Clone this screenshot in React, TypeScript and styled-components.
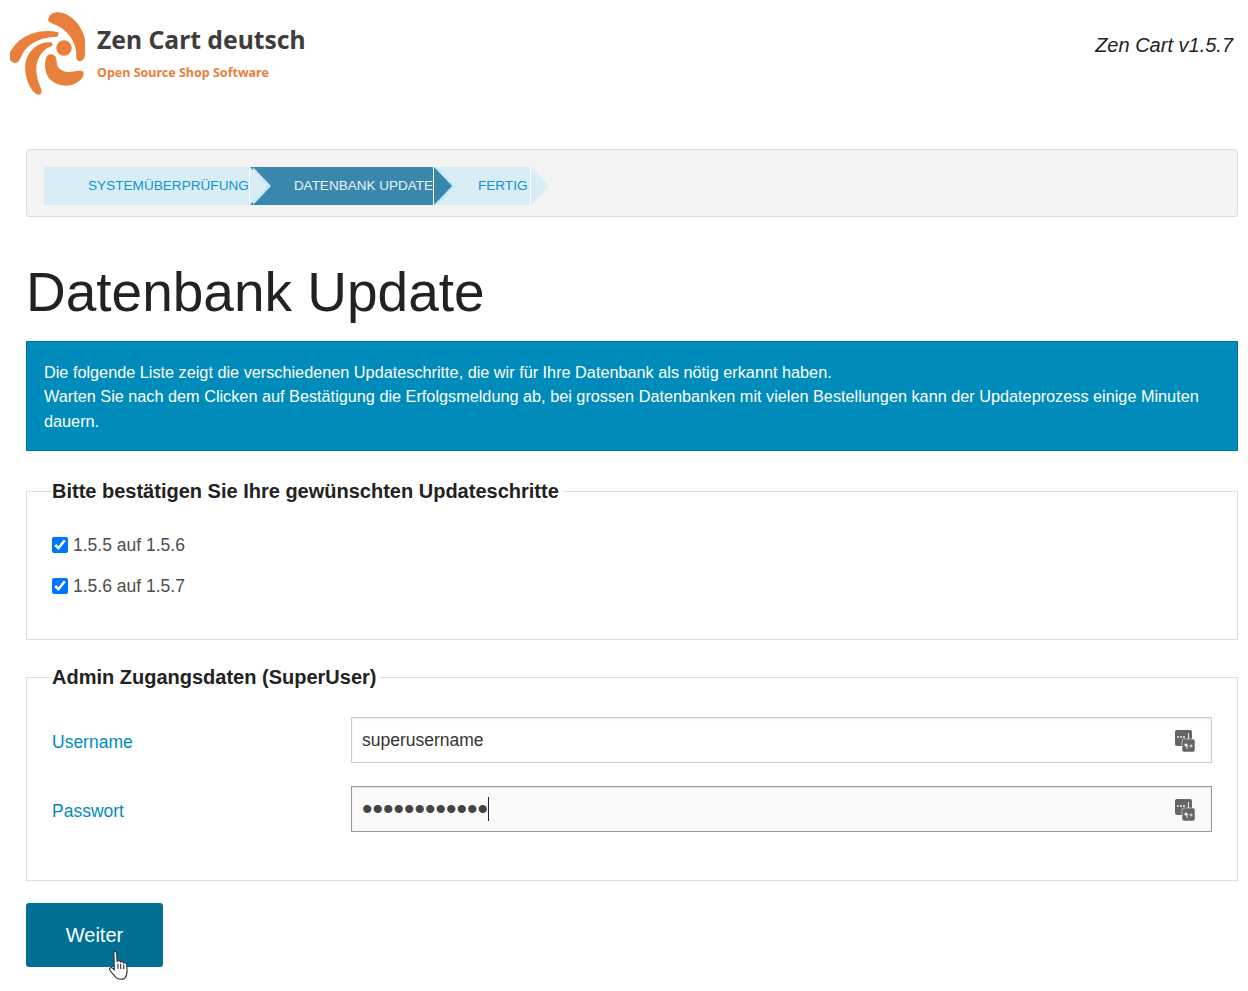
import React from 'react';
import styled, { createGlobalStyle } from 'styled-components';

const GlobalStyle = createGlobalStyle`
  html, body {
    margin: 0;
    padding: 0;
    background: #fff;
    font-family: "Liberation Sans", Arial, sans-serif;
    color: #222;
  }
  * {
    box-sizing: border-box;
  }
`;

const Page = styled.div`
  position: relative;
  width: 1248px;
  min-height: 991px;
  padding: 0 10px 24px 26px;
`;

const Header = styled.header`
  display: flex;
  justify-content: space-between;
  height: 149px;
  margin-left: -16px;
  padding-top: 12px;
`;

const Brand = styled.div`
  display: flex;
  align-items: flex-start;
  gap: 12px;
`;

const BrandText = styled.div`
  display: flex;
  flex-direction: column;
  padding-top: 10px;
  font-family: "Noto Sans", sans-serif;
  font-weight: 700;
`;

const BrandName = styled.span`
  font-size: 24.7px;
  line-height: 36px;
  color: #3f3d3c;
`;

const BrandSlogan = styled.span`
  margin-top: 6px;
  font-size: 12.5px;
  line-height: 18px;
  color: #e8803c;
`;

const Version = styled.div`
  margin: 20px 5px 0 0;
  font-size: 20px;
  line-height: 26px;
  font-style: italic;
  color: #222;
`;

const Crumbs = styled.nav`
  display: flex;
  height: 68px;
  padding: 17px;
  background: #f3f3f3;
  border: 1px solid #ddd;
  border-radius: 3px;
`;

const Step = styled.div<{ $active?: boolean }>`
  position: relative;
  display: flex;
  align-items: center;
  height: 38px;
  padding: 0 0 2px 44px;
  font-size: ${(p) => (p.$active ? '13.5px' : '13.6px')};
  color: ${(p) => (p.$active ? '#e8f3f8' : '#1295cf')};
  background: ${(p) => (p.$active ? '#3a87ad' : '#d9edf7')};
  border-right: 1px solid #fff;

  &:last-child {
    padding-right: 2px;
  }

  &::before,
  &::after {
    content: '';
    position: absolute;
    top: 0;
    border-style: solid;
    border-width: 19px 0 19px 18px;
    border-top-color: transparent;
    border-bottom-color: transparent;
  }

  &::before {
    z-index: 1;
    left: calc(100% + 4px);
    border-left-color: #c6e7f4;
  }

  &:last-child::before {
    display: none;
  }

  &::after {
    z-index: 2;
    left: calc(100% + 1px);
    border-left-color: ${(p) => (p.$active ? '#3a87ad' : '#d9edf7')};
  }
`;

const Title = styled.h1`
  margin: 40px 0 14px;
  font-size: 55px;
  line-height: 70px;
  font-weight: 400;
  color: #222;
`;

const Notice = styled.div`
  padding: 18px 17px 16.8px;
  font-size: 16.25px;
  line-height: 24.4px;
  color: #fff;
  background: #008cba;
  border: 1px solid #007095;
`;

const Group = styled.fieldset<{ $height: number; $gap: number }>`
  height: ${(p) => p.$height}px;
  margin: ${(p) => p.$gap}px 0 0;
  padding: 0 25px;
  border: 1px solid #ddd;
`;

const GroupTitle = styled.legend`
  padding: 0;
  padding-right: 4px;
  font-size: 20px;
  line-height: 26px;
  font-weight: 700;
  color: #222;
`;

const CheckRow = styled.label`
  display: flex;
  align-items: center;
  gap: 5px;
  height: 24px;
  margin-top: 17px;
  font-size: 17.5px;
  color: #4d4d4d;

  &:first-of-type {
    margin-top: 29px;
  }
`;

const Check = styled.input`
  width: 16px;
  height: 16px;
  margin: 0;
`;

const FormRow = styled.div`
  display: grid;
  grid-template-columns: 299px 861px;
  align-items: center;
  height: 46px;
  margin-top: 23px;

  &:first-of-type {
    margin-top: 27px;
  }
`;

const FieldLabel = styled.label`
  font-size: 17.5px;
  color: #008cba;
  padding-top: 4px;
`;

const FieldBox = styled.div<{ $focused?: boolean }>`
  display: flex;
  align-items: center;
  justify-content: space-between;
  height: 46px;
  padding: 0 15px 0 10px;
  font-size: 17.5px;
  color: #333;
  background: ${(p) => (p.$focused ? '#fafafa' : '#fff')};
  border: 1px solid ${(p) => (p.$focused ? '#999' : '#ccc')};
  box-shadow: inset 0 1px 2px rgba(0, 0, 0, 0.1);
`;

const FieldValue = styled.span`
  padding-top: 1px;
`;

const Secret = styled.span`
  display: inline-block;
  height: 24px;
  padding-top: 1px;
  line-height: 22px;
  border-right: 1px solid #222;
  color: #444;
  font-size: 30px;
`;

const IconSvg = styled.svg`
  margin-top: 1px;
`;

const SubmitButton = styled.button`
  display: block;
  width: 137px;
  height: 64px;
  margin-top: 22px;
  padding: 0;
  font-family: inherit;
  font-size: 20px;
  color: #fff;
  background: #007095;
  border: 0;
  border-radius: 3px;
`;

const Pointer = styled.div`
  position: absolute;
  left: 107px;
  top: 950px;
  line-height: 0;
`;

const Logo = () => (
  <svg width="75" height="84" viewBox="10 12 75 84" aria-hidden="true">
    <g fill="#e8803c" stroke="#e8803c" strokeWidth="1.5" strokeLinejoin="round">
      <path d="M50 17C52 12 60 12 66 15C80 22 88 40 84 56C83 61 78 62 77 58C78 42 68 28 53 23C49 22 48 20 50 17Z" />
      <path d="M58 33C40 29 20 35 11 52C8 58 12 63 16 62C20 61 20 55 24 50C31 41 44 36 57 36Z" />
      <path d="M51 43C38 42 28 52 26 64C25 76 30 88 36 93C40 96 42 92 40 88C35 78 34 66 38 58C41 51 46 47 52 45Z" />
      <path d="M50 55C45 56 45 68 47 73C50 82 62 87 72 84C78 82 83 78 83 74C83 71 79 71 75 72C68 74 60 72 57 67C55 63 57 58 54 56C53 55 51 55 50 55Z" />
      <circle cx="64" cy="48" r="7" />
    </g>
  </svg>
);

const PasswordIcon = () => (
  <IconSvg width="22" height="24" viewBox="0 0 22 24" aria-hidden="true">
    <rect x="1" y="1" width="17" height="16" rx="2" fill="#666" />
    <rect x="8" y="10" width="13" height="13" rx="2" fill="#666" stroke="#fff" strokeWidth="0.5" />
    <g fill="#eee">
      <circle cx="4" cy="8" r="1" />
      <circle cx="7" cy="8" r="1" />
      <circle cx="10" cy="8" r="1" />
      <rect x="14" y="4" width="1" height="6" />
      <circle cx="12" cy="16" r="1.6" />
      <rect x="12.6" y="16" width="1" height="4" />
      <rect x="15.5" y="16.500" width="3" height="1" />
      <rect x="16.500" y="15.500" width="1" height="3" />
    </g>
  </IconSvg>
);

const HandCursor = () => (
  <svg width="22" height="30" viewBox="0 0 21 33" aria-hidden="true">
    <path
      d="M6 3C6 1 9 1 9 3L9.500 13C10 11 13 11 13 13.500C14 12 16.500 12.500 16.500 14.500C17.500 13.500 20 14 20 16L20.500 23C20.500 27 19 30 17.500 31.500C14 32.500 10 32 8 30C6 27 3 24.500 1.500 22C0.500 20 3 18.500 4.500 20L6.500 22Z"
      fill="#fff"
      stroke="#2a2f38"
      strokeWidth="1.2"
      strokeLinejoin="round"
    />
    <path d="M10.500 15V21M13.500 15V21M16.800 16V21" stroke="#2a2f38" strokeWidth="1.2" fill="none" />
  </svg>
);

const App = () => {
  return (
    <Page>
      <GlobalStyle />
      <Header>
        <Brand>
          <Logo />
          <BrandText>
            <BrandName>Zen Cart deutsch</BrandName>
            <BrandSlogan>Open Source Shop Software</BrandSlogan>
          </BrandText>
        </Brand>
        <Version>Zen Cart v1.5.7</Version>
      </Header>

      <Crumbs>
        <Step>SYSTEMÜBERPRÜFUNG</Step>
        <Step $active>DATENBANK UPDATE</Step>
        <Step>FERTIG</Step>
      </Crumbs>

      <Title>Datenbank Update</Title>

      <Notice>
        Die folgende Liste zeigt die verschiedenen Updateschritte, die wir für Ihre Datenbank als nötig erkannt haben.
        <br />
        Warten Sie nach dem Clicken auf Bestätigung die Erfolgsmeldung ab, bei grossen Datenbanken mit vielen
        Bestellungen kann der Updateprozess einige Minuten dauern.
      </Notice>

      <Group $height={162} $gap={27}>
        <GroupTitle>Bitte bestätigen Sie Ihre gewünschten Updateschritte</GroupTitle>
        <CheckRow>
          <Check type="checkbox" defaultChecked />
          1.5.5 auf 1.5.6
        </CheckRow>
        <CheckRow>
          <Check type="checkbox" defaultChecked />
          1.5.6 auf 1.5.7
        </CheckRow>
      </Group>

      <Group $height={217} $gap={24}>
        <GroupTitle>Admin Zugangsdaten (SuperUser)</GroupTitle>
        <FormRow>
          <FieldLabel>Username</FieldLabel>
          <FieldBox>
            <FieldValue>superusername</FieldValue>
            <PasswordIcon />
          </FieldBox>
        </FormRow>
        <FormRow>
          <FieldLabel>Passwort</FieldLabel>
          <FieldBox $focused>
            <Secret>••••••••••••</Secret>
            <PasswordIcon />
          </FieldBox>
        </FormRow>
      </Group>

      <SubmitButton type="button">Weiter</SubmitButton>
      <Pointer>
        <HandCursor />
      </Pointer>
    </Page>
  );
};

export default App;
